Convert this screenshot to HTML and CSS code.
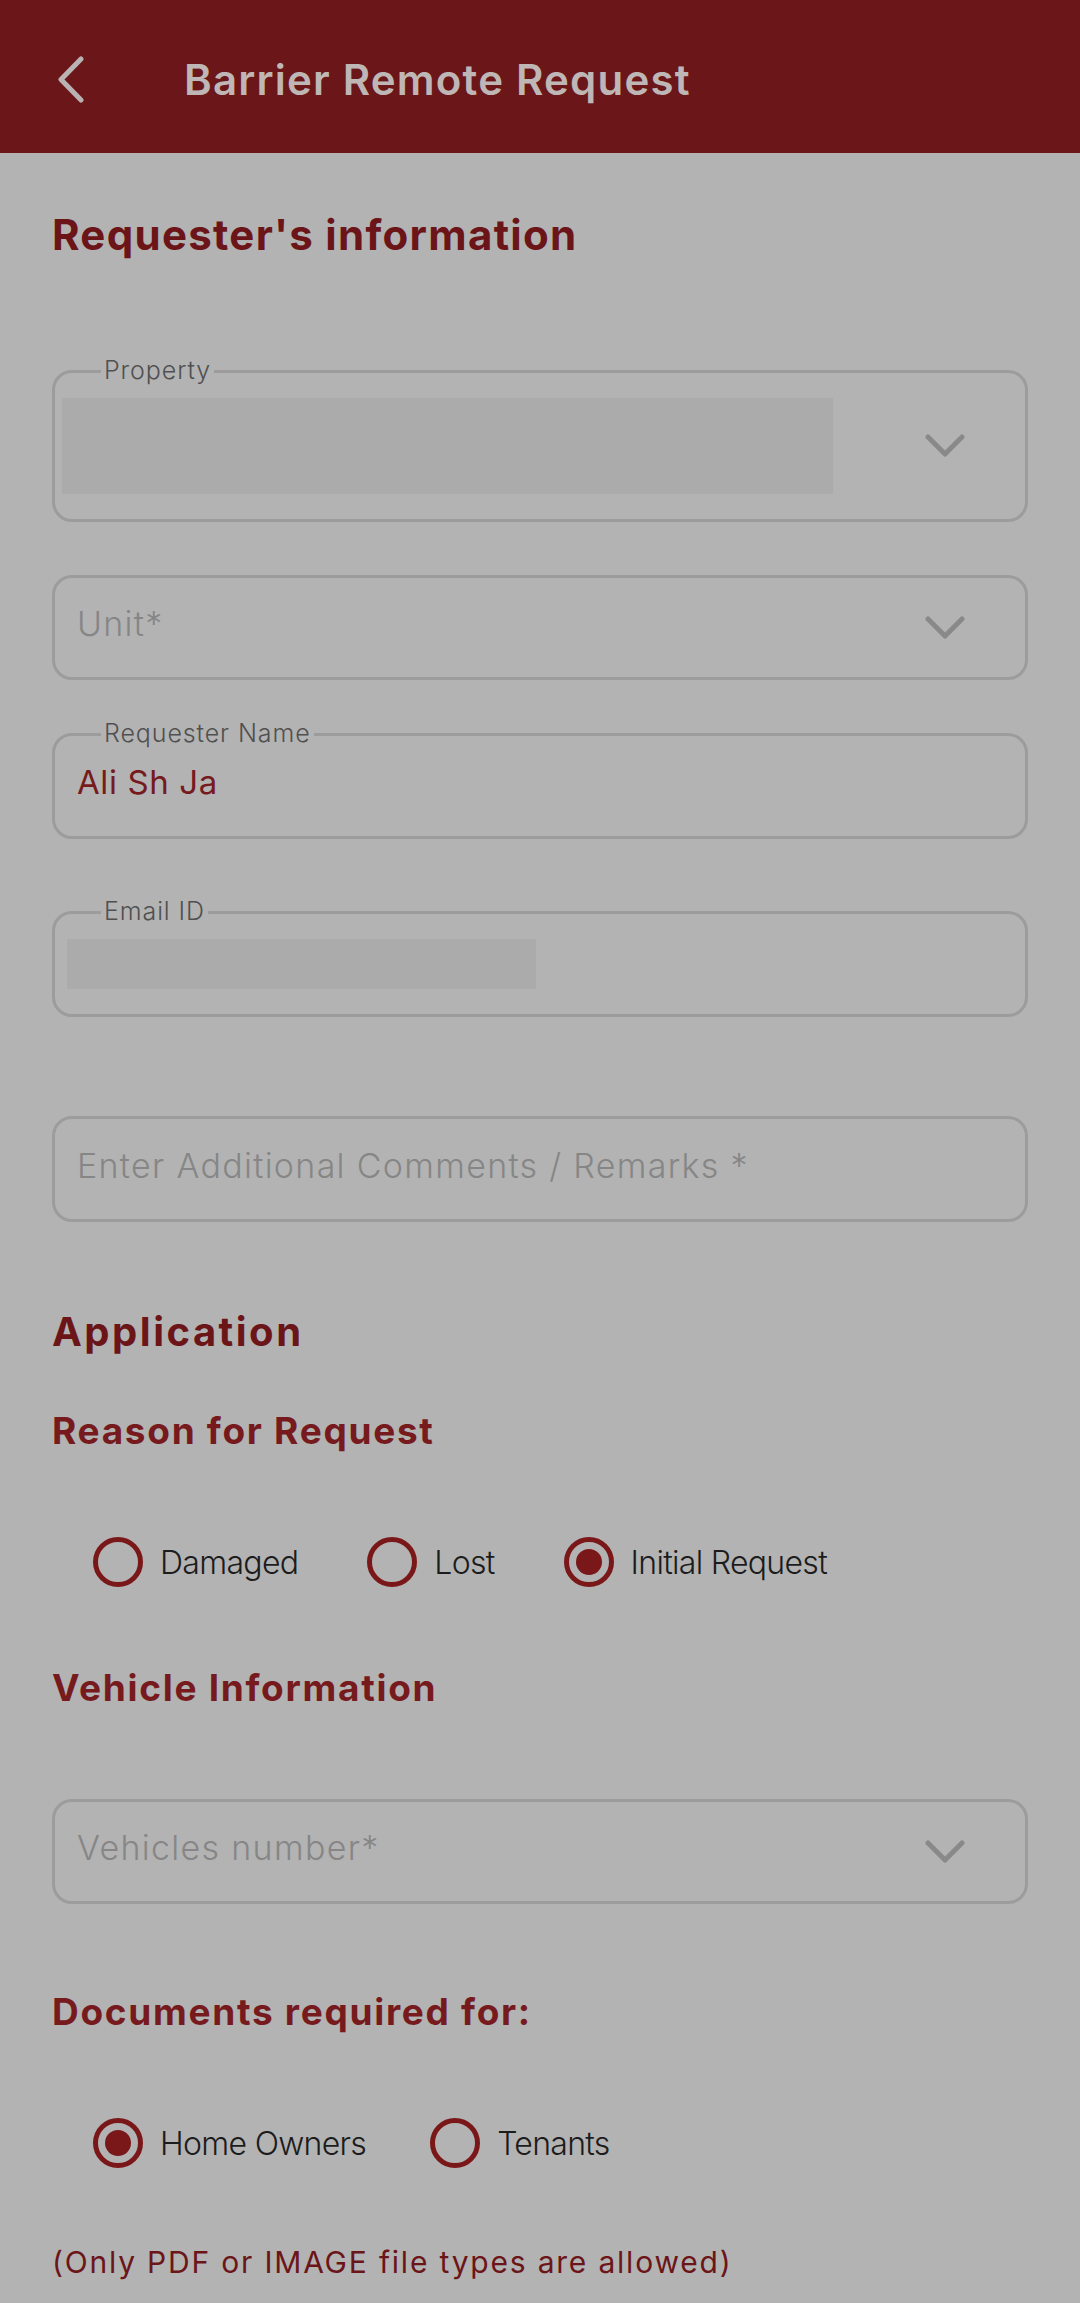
FILE: index.html
```html
<!DOCTYPE html>
<html lang="en">
<head>
    <meta charset="UTF-8">
    <meta name="viewport" content="width=device-width, initial-scale=1.0">
    <title>Barrier Remote Request</title>
    <link rel="stylesheet" href="styles.css">
</head>
<body>
    <header class="topbar">
        <button class="back-btn" aria-label="Back">
            <svg width="27" height="47" viewBox="0 0 27 47">
                <polyline points="24,3 4,23.5 24,44" fill="none" stroke="currentColor" stroke-width="5" stroke-linecap="round" stroke-linejoin="round"/>
            </svg>
        </button>
        <h1 class="topbar-title">Barrier Remote Request</h1>
    </header>

    <main class="content">
        <h2 class="section-title">Requester's information</h2>

        <div class="field field-property">
            <span class="field-label">Property</span>
            <div class="masked masked-property"></div>
            <svg class="chevron" width="40" height="24" viewBox="0 0 40 24">
                <polyline points="3,3 20,20 37,3" fill="none" stroke="currentColor" stroke-width="5" stroke-linecap="round" stroke-linejoin="round"/>
            </svg>
        </div>

        <div class="field field-select field-unit">
            <span class="placeholder">Unit*</span>
            <svg class="chevron" width="40" height="24" viewBox="0 0 40 24">
                <polyline points="3,3 20,20 37,3" fill="none" stroke="currentColor" stroke-width="5" stroke-linecap="round" stroke-linejoin="round"/>
            </svg>
        </div>

        <div class="field field-input field-name">
            <span class="field-label">Requester Name</span>
            <span class="value">Ali Sh Ja</span>
        </div>

        <div class="field field-input field-email">
            <span class="field-label">Email ID</span>
            <div class="masked masked-email"></div>
        </div>

        <div class="field field-input field-comments">
            <span class="placeholder">Enter Additional Comments / Remarks *</span>
        </div>

        <h2 class="section-title app-title">Application</h2>
        <h3 class="sub-title reason-title">Reason for Request</h3>

        <div class="radio-row reason-row">
            <label class="radio"><span class="radio-circle"></span>Damaged</label>
            <label class="radio"><span class="radio-circle"></span>Lost</label>
            <label class="radio"><span class="radio-circle checked"></span>Initial Request</label>
        </div>

        <h3 class="sub-title vehicle-title">Vehicle Information</h3>

        <div class="field field-select field-vehicle">
            <span class="placeholder">Vehicles number*</span>
            <svg class="chevron" width="40" height="24" viewBox="0 0 40 24">
                <polyline points="3,3 20,20 37,3" fill="none" stroke="currentColor" stroke-width="5" stroke-linecap="round" stroke-linejoin="round"/>
            </svg>
        </div>

        <h3 class="sub-title docs-title">Documents required for:</h3>

        <div class="radio-row docs-row">
            <label class="radio"><span class="radio-circle checked"></span>Home Owners</label>
            <label class="radio"><span class="radio-circle"></span>Tenants</label>
        </div>

        <p class="note">(Only PDF or IMAGE file types are allowed)</p>
    </main>
</body>
</html>
```

FILE: styles.css
```css
body {
    margin: 0;
    width: 1080px;
    min-height: 2303px;
    background-color: #b3b3b3;
    font-family: Inter, "Noto Sans", sans-serif;
    color: #1c1c1c;
}

.topbar {
    height: 153px;
    background-color: #6b1619;
    display: flex;
    align-items: center;
}

.back-btn {
    background: none;
    border: none;
    padding: 0;
    margin-left: 57px;
    margin-top: 6px;
    width: 27px;
    height: 47px;
    color: #bab3b3;
}

.topbar-title {
    margin: 6px 0 0 100px;
    font-size: 42px;
    line-height: 1;
    font-weight: 600;
    letter-spacing: 1.2px;
    color: #bfb6b6;
}

.content {
    padding: 0 52px;
}

.section-title {
    margin: 61px 0 0;
    font-size: 42px;
    line-height: 1;
    font-weight: 700;
    letter-spacing: 1.3px;
    color: #6b1519;
}

.sub-title {
    margin: 0;
    font-size: 37px;
    line-height: 1;
    font-weight: 700;
    letter-spacing: 1.7px;
    color: #761a1d;
}

/* form fields */
.field {
    position: relative;
    box-sizing: border-box;
    border: 3px solid #9c9c9c;
    border-radius: 20px;
    display: flex;
    align-items: center;
    padding: 0 22px;
}

.field-label {
    position: absolute;
    top: -17px;
    left: 46px;
    padding: 0 3px;
    background-color: #b3b3b3;
    font-size: 25px;
    line-height: 28px;
    font-weight: 300;
    letter-spacing: 0.9px;
    color: #505050;
}

.field-property {
    margin-top: 114px;
    height: 152px;
    padding: 0 60px 0 7px;
    justify-content: space-between;
}

.field-select {
    height: 105px;
    justify-content: space-between;
    padding-right: 60px;
}

.field-input {
    height: 106px;
}

.field-unit { margin-top: 53px; }
.field-name { margin-top: 53px; }
.field-email { margin-top: 72px; padding-left: 12px; }
.field-comments { margin-top: 99px; }

.masked {
    background-color: #ababab;
}

.masked-property {
    width: 771px;
    height: 96px;
}

.masked-email {
    width: 469px;
    height: 50px;
}

.chevron {
    color: #898989;
}

.placeholder {
    font-size: 34px;
    font-weight: 300;
    letter-spacing: 1.3px;
    color: #868686;
    margin-bottom: 8px;
}

.value {
    font-size: 33px;
    font-weight: 400;
    letter-spacing: 0.6px;
    color: #761a1d;
    margin-bottom: 8px;
}

.app-title { margin-top: 90px; font-size: 40px; letter-spacing: 2.5px; }
.reason-title { margin-top: 60px; }
.vehicle-title { margin-top: 82px; }
.docs-title { margin-top: 89px; }

/* radio groups */
.radio-row {
    display: flex;
    gap: 69px;
    padding-left: 41px;
    margin-top: 88px;
}

.radio {
    display: flex;
    align-items: center;
    gap: 17px;
    font-size: 32px;
    font-weight: 300;
    letter-spacing: -0.7px;
    color: #1c1c1c;
}

.radio-circle {
    box-sizing: border-box;
    width: 50px;
    height: 50px;
    border: 5px solid #7a1719;
    border-radius: 50%;
    display: flex;
    align-items: center;
    justify-content: center;
}

.radio-circle.checked::after {
    content: "";
    width: 26px;
    height: 26px;
    border-radius: 50%;
    background-color: #7a1719;
}

.vehicle-title + .field { margin-top: 93px; }

.docs-row { gap: 64px; }

.note {
    margin: 79px 0 0;
    font-size: 30px;
    line-height: 1;
    letter-spacing: 1.8px;
    color: #6b1519;
}
```
